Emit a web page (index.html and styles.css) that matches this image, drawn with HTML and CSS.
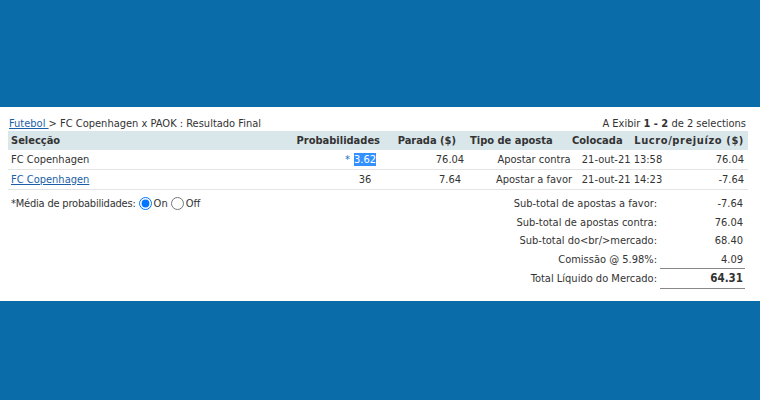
FILE: index.html
```html
<!DOCTYPE html>
<html lang="pt">
<head>
<meta charset="utf-8">
<title>Resultado Final</title>
<link rel="stylesheet" href="styles.css">
</head>
<body>
<div class="panel">
  <div class="crumbs">
    <div class="path"><a href="#" class="link">Futebol </a>&gt; FC Copenhagen x PAOK : Resultado Final</div>
    <div class="count">A Exibir <b>1 - 2</b> de 2 selections</div>
  </div>
  <div class="head">
    <div class="h-sel">Selecção</div>
    <div class="h-prob">Probabilidades</div>
    <div class="h-stake">Parada ($)</div>
    <div class="h-type">Tipo de aposta</div>
    <div class="h-placed">Colocada</div>
    <div class="h-pl">Lucro/prejuízo ($)</div>
  </div>
  <div class="row">
    <div class="c-sel">FC Copenhagen</div>
    <div class="c-prob"><span class="odds"><span class="star">*</span><span class="hl">3.62</span></span></div>
    <div class="c-stake">76.04</div>
    <div class="c-type">Apostar contra</div>
    <div class="c-placed">21-out-21 13:58</div>
    <div class="c-pl">76.04</div>
  </div>
  <div class="row">
    <div class="c-sel"><a href="#" class="link">FC Copenhagen</a></div>
    <div class="c-prob">36</div>
    <div class="c-stake">7.64</div>
    <div class="c-type">Apostar a favor</div>
    <div class="c-placed">21-out-21 14:23</div>
    <div class="c-pl">-7.64</div>
  </div>
  <div class="bottom">
    <div class="options">
      <span class="opt-label">*Média de probabilidades:</span>
      <label class="opt"><input type="radio" name="avg" checked>On</label>
      <label class="opt"><input type="radio" name="avg">Off</label>
    </div>
    <div class="summary">
      <div class="s-label">Sub-total de apostas a favor:</div><div class="s-val">-7.64</div>
      <div class="s-label">Sub-total de apostas contra:</div><div class="s-val">76.04</div>
      <div class="s-label">Sub-total do&lt;br/&gt;mercado:</div><div class="s-val">68.40</div>
      <div class="s-label">Comissão @ 5.98%:</div><div class="s-val">4.09</div>
      <div class="s-label s-total-label">Total Líquido do Mercado:</div><div class="s-val s-total">64.31</div>
    </div>
  </div>
</div>
</body>
</html>
```
FILE: styles.css
```css
html, body {
  margin: 0;
  padding: 0;
}
body {
  background: #0a6ca8;
  width: 760px;
  height: 400px;
  overflow: hidden;
  font-family: "DejaVu Sans Condensed", "DejaVu Sans", sans-serif;
  font-stretch: condensed;
  font-size: 11px;
  color: #333;
}
.panel {
  margin-top: 107px;
  height: 185px;
  padding: 9px 12px 0 8px;
  background: #fff;
}
.link {
  color: #1a5fa8;
  text-decoration: underline;
}
.crumbs {
  display: flex;
  justify-content: space-between;
  align-items: center;
  height: 15px;
  line-height: 16px;
  padding: 0 2px 0 1px;
}
.count b {
  font-weight: bold;
}
.head {
  display: grid;
  grid-template-columns: 282px 92px 76px 110px 62px 118px;
  height: 19px;
  line-height: 19px;
  background: #d9e6ea;
  font-weight: bold;
  color: #333;
}
.h-sel { padding-left: 3px; }
.h-prob { text-align: right; padding-right: 2px; }
.h-stake { text-align: right; padding-right: 2px; }
.h-type { padding-left: 12px; }
.h-placed { padding-left: 4px; }
.h-pl {
  text-align: right;
  padding-right: 4px;
  white-space: nowrap;
  letter-spacing: 0.6px;
}
.row {
  display: grid;
  grid-template-columns: 312px 90px 80px 88px 88px 82px;
  height: 19px;
  line-height: 20px;
  border-bottom: 1px solid #e4e4e4;
  white-space: nowrap;
}
.c-sel { padding-left: 3px; }
.c-prob { text-align: center; }
.c-stake { text-align: center; }
.c-type { text-align: center; }
.c-placed { text-align: center; }
.c-pl { text-align: right; padding-right: 4px; }
.odds {
  position: relative;
}
.star {
  position: absolute;
  right: 100%;
  margin-right: 4px;
  color: #1a6fc0;
}
.hl {
  background: #3390ff;
  color: #fff;
}
.bottom {
  display: flex;
  justify-content: space-between;
  padding-top: 4px;
}
.options {
  display: flex;
  align-items: center;
  height: 19px;
  padding-left: 3px;
}
.opt-label {
  letter-spacing: -0.2px;
}
.opt {
  display: flex;
  align-items: center;
}
.opt input {
  margin: 0 2px 0 3px;
  width: 13px;
  height: 13px;
}
.summary {
  display: grid;
  grid-template-columns: 230px 85px;
  column-gap: 3px;
  margin-right: 3px;
}
.s-label {
  text-align: right;
  height: 18.6px;
  line-height: 19px;
}
.s-val {
  text-align: right;
  height: 18.6px;
  line-height: 19px;
  padding-right: 2px;
}
.s-total-label {
  height: 20px;
  line-height: 21px;
}
.s-total {
  height: 19px;
  line-height: 19px;
  border-top: 1px solid #888;
  border-bottom: 1px solid #888;
  font-weight: bold;
  font-size: 11.5px;
}
```
